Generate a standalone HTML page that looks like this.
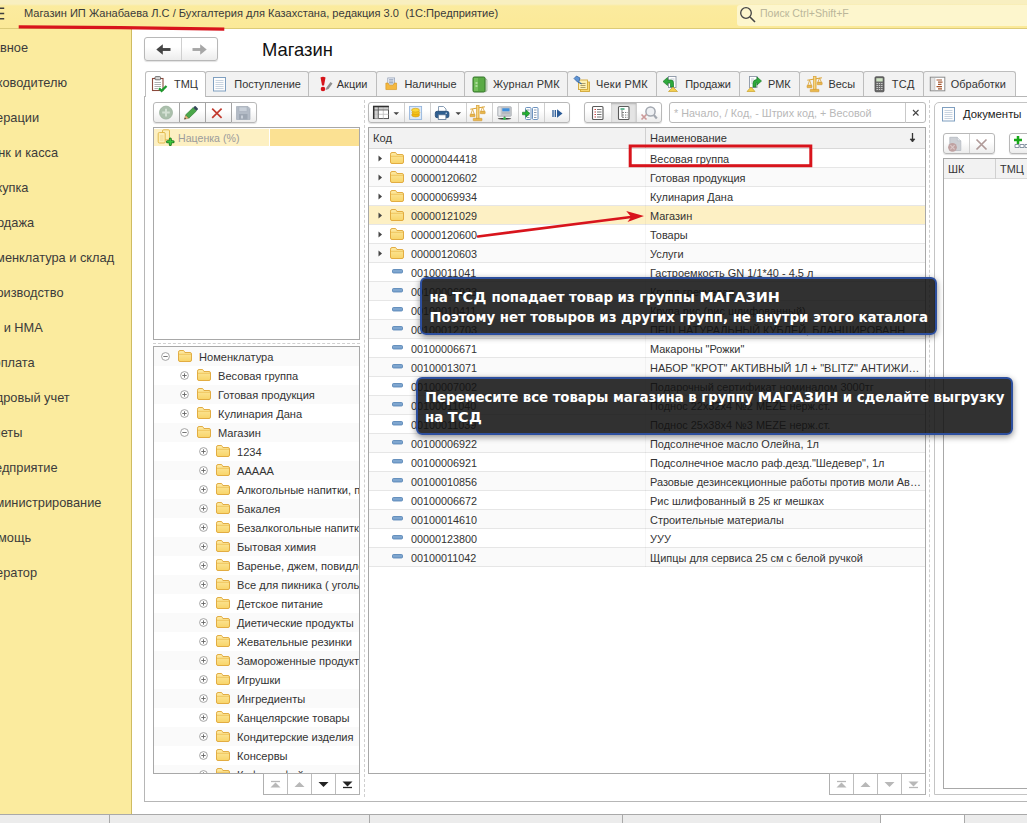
<!DOCTYPE html>
<html lang="ru"><head><meta charset="utf-8"><title>Магазин</title>
<style>
*{box-sizing:border-box;margin:0;padding:0}
html,body{width:1027px;height:823px;overflow:hidden;background:#fff}
body{font-family:"Liberation Sans",Arial,sans-serif;font-size:11.1px;color:#333;position:relative}
.abs,.abs>*,.row>*{position:absolute}
svg{position:absolute;overflow:visible}
#top{left:0;top:0;width:1027px;height:29px;background:linear-gradient(#f8efc0 0,#f8efc0 4px,#fbeb9e 6px,#fbe998 100%);border-bottom:1px solid #dccb78}
#top .ttl{left:24px;top:6.500px;color:#3a3a3a;white-space:pre}
#top .ham{left:-8px;top:5px;font-size:14px;color:#444}
#search{left:737px;top:5px;width:290px;height:21px;background:#fdf6cd;border-radius:3px 0 0 3px}
#search span{left:23px;top:2px;color:#bbb69a;font-size:10.600px}
#side{left:0;top:29px;width:132px;height:785px;background:#fbeb9e;border-right:1px solid #cfbc62}
#side div{white-space:nowrap;font-size:12.8px;line-height:16px;color:#3b3b3b}
#bot{left:0;top:814px;width:1027px;height:9px;background:#ececec;border-top:1px solid #a9a9a9}
#bot i{top:0;width:1px;height:9px;background:#a9a9a9}
.t{white-space:nowrap;line-height:14px}
.tab{top:71px;height:25px;background:#f2f2f2;border:1px solid #bdbdbd;border-bottom:none;border-radius:3px 3px 0 0}
.tab.on{background:#fff;height:26px;top:71px;z-index:2}
.tab span{top:5px;white-space:nowrap;font-size:10.95px;line-height:14px;color:#333}
.tab.on span{top:5px}
#frame{left:144px;top:96px;width:900px;height:706px;border:1px solid #b6b6b6;background:#fff}
.btns{border:1px solid #b8b8b8;border-radius:3px;background:linear-gradient(#fff 40%,#ececec);box-shadow:0 1px 1px rgba(0,0,0,.12)}
.btns i{top:0;width:1px;height:100%;background:#cfcfcf}
.box{border:1px solid #a8a8a8;background:#fff;overflow:hidden}
.row{left:0;height:19px;width:100%}
.row .t{top:3px}
.g{background:#fafafa}
.vd{width:0;border-left:1px dashed #cfcfcf}
.hd{height:0;border-top:1px dashed #cfcfcf}
.ov{background:rgba(18,18,18,.87);border:2px solid #2d4f9e;border-radius:6px;box-shadow:0 2px 6px rgba(0,0,0,.45);color:#fff;font-family:"DejaVu Sans","Liberation Sans",sans-serif;font-weight:bold;white-space:nowrap}
.ov b{position:static;font-size:14.4px;line-height:0;letter-spacing:.05px}
.ov b.w{letter-spacing:.45px}
</style></head><body>
<svg width="0" height="0" style="left:0;top:0"><defs><linearGradient id="fg" x1="0" y1="0" x2="0" y2="1"><stop offset="0" stop-color="#fdeaa4"/><stop offset="1" stop-color="#f8d468"/></linearGradient></defs></svg>
<div id="top" class="abs">
 <svg style="left:0;top:0" width="6" height="24"><path d="M-4 8.300h8.200M-4 13.500h8.200M-4 18.700h8.200" stroke="#3f3f3f" stroke-width="1.500"/></svg>
 <div class="ttl">Магазин ИП Жанабаева Л.С / Бухгалтерия для Казахстана, редакция 3.0  (1С:Предприятие)</div>
 <div id="search" class="abs"><svg style="left:2px;top:1px" width="17" height="17" viewBox="0 0 17 17"><circle cx="7" cy="7" r="5.300" fill="none" stroke="#444" stroke-width="1.300"/><path d="M11 11l5 5" stroke="#444" stroke-width="1.600"/></svg><span>Поиск Ctrl+Shift+F</span></div>
</div>
<div id="side" class="abs">
<div style="top:11px;right:102.9px">Главное</div>
<div style="top:46px;right:63.9px">Руководителю</div>
<div style="top:81px;right:91.9px">Операции</div>
<div style="top:116px;right:72.9px">Банк и касса</div>
<div style="top:151px;right:102.5px">Покупка</div>
<div style="top:186px;right:96.9px">Продажа</div>
<div style="top:221px;right:16.9px">Номенклатура и склад</div>
<div style="top:256px;right:67.5px">Производство</div>
<div style="top:291px;right:88.2px">ОС и НМА</div>
<div style="top:326px;right:96.3px">Зарплата</div>
<div style="top:361px;right:61.3px">Кадровый учет</div>
<div style="top:396px;right:108.6px">Отчеты</div>
<div style="top:431px;right:73.4px">Предприятие</div>
<div style="top:466px;right:29.6px">Администрирование</div>
<div style="top:501px;right:99.9px">Помощь</div>
<div style="top:536px;right:93.9px">Оператор</div>
</div>

<div class="abs btns" style="left:144px;top:37px;width:74px;height:24px"><i style="left:36px"></i>
<svg style="left:9px;top:5px" width="18" height="13"><path d="M16.500 6.500H6" stroke="#444" stroke-width="2.900"/><path d="M8.800 1.200L2.300 6.500l6.500 5.300z" fill="#444"/></svg>
<svg style="left:46px;top:5px" width="18" height="13"><path d="M1.500 6.500H12" stroke="#a6a6a6" stroke-width="2.900"/><path d="M9.200 1.200l6.500 5.300-6.500 5.300z" fill="#a6a6a6"/></svg></div>
<div class="abs t" style="left:262px;top:39px;font-size:18.4px;line-height:22px;color:#111">Магазин</div>
<div class="abs tab on" style="left:145px;width:61px"><svg style="left:5px;top:4px" width="16" height="16" viewBox="0 0 16 16"><rect x="1.500" y="2.500" width="10.500" height="12" fill="#fff" stroke="#8b4a3c" stroke-width="1.100"/><rect x="4" y=".600" width="5.500" height="3.200" rx=".800" fill="#d8d8d8" stroke="#555" stroke-width=".800"/><path d="M3.500 6.500h6.500M3.500 8.500h6.500M3.500 10.500h6.500M3.500 12.500h3.500" stroke="#9a9a9a" stroke-width=".800"/><path d="M8 12.200l2.600 2.600L15.500 10" fill="none" stroke="#1e9a2e" stroke-width="2.300"/></svg><span style="left:28.0px">ТМЦ</span></div>
<div class="abs tab" style="left:205px;width:104px"><svg style="left:6px;top:4px" width="16" height="16" viewBox="0 0 16 16"><rect x="1.500" y="1.500" width="12" height="13.500" fill="#fdfdfd" stroke="#7f9fc0"/><path d="M3.500 4.500h8M3.500 6.500h8M3.500 8.500h8M3.500 10.500h8M3.500 12.500h8" stroke="#c3cfdc" stroke-width=".900"/></svg><span style="left:28.3px">Поступление</span></div>
<div class="abs tab" style="left:308px;width:69px"><svg style="left:9px;top:4px" width="16" height="16" viewBox="0 0 16 16"><path d="M2.500 1.500Q5 0 7.500 1.500L6 9.500H4z" fill="#d6141a"/><circle cx="5" cy="13" r="2.300" fill="#d6141a"/><path d="M8.500 11.500l4-5.500 2 1.500-4 5.500-2.800 1z" fill="#8f8f8f"/></svg><span style="left:27.8px">Акции</span></div>
<div class="abs tab" style="left:376px;width:89px"><svg style="left:7px;top:4px" width="16" height="16" viewBox="0 0 16 16"><g transform="translate(1.200,1.500) scale(.860)"><rect x="3" y=".500" width="8" height="7" fill="#e9eef6" stroke="#8b9ab3" stroke-width=".800"/><path d="M4.500 2.500h5M4.500 4.200h5M4.500 5.900h5" stroke="#7a8aa5" stroke-width=".800"/><path d="M.800 6.500h2.500l1.500 2.500h4.400l1.500-2.500h2.500v7.500H.800z" fill="#f4b840" stroke="#d99a25" stroke-width=".800"/></g></svg><span style="left:27.4px">Наличные</span></div>
<div class="abs tab" style="left:464px;width:104px"><svg style="left:7px;top:4px" width="16" height="16" viewBox="0 0 16 16"><path d="M13 2.500l2 1.200v11l-2 1.300z" fill="#d9e6d3" stroke="#7f9a78" stroke-width=".600"/><rect x="1" y="1" width="12" height="15" rx="1.300" fill="#5aaa45" stroke="#34742a"/><rect x="2" y="2" width="4" height="13" fill="#7cc763" opacity=".700"/><path d="M3.500 7h2M3.500 10h2" stroke="#e7f5df" stroke-width="1.200"/></svg><span style="left:28.0px;letter-spacing:.1px">Журнал РМК</span></div>
<div class="abs tab" style="left:567px;width:90px"><svg style="left:6px;top:4px" width="16" height="16" viewBox="0 0 16 16"><rect x="6.500" y="6" width="9" height="9.500" fill="#f7d873" stroke="#d1a637" stroke-width=".900"/><rect x="4.500" y="4" width="9" height="9.500" fill="#fdf0b4" stroke="#d1a637" stroke-width=".900"/><path d="M6.500 7.500h5M6.500 9.500h5M6.500 11.500h5" stroke="#9a8a55" stroke-width=".800"/><path d="M0 2.500l2.500-2.500 3.500 2-1 3.500 2.500 2.500-4-2z" fill="#5f95d6" stroke="#2a5a9a" stroke-width=".700"/></svg><span style="left:28.0px;letter-spacing:.24px">Чеки РМК</span></div>
<div class="abs tab" style="left:656px;width:84px"><svg style="left:6px;top:4px" width="16" height="16" viewBox="0 0 16 16"><rect x="5.500" y=".500" width="7.500" height="11" fill="#fff" stroke="#8a95a5" stroke-width=".900"/><path d="M7.500 3h4M7.500 5h4" stroke="#b0b8c4" stroke-width=".800"/><path d="M0 5.500L4.500 1.500V4h3.500Q10.500 4 10.500 7V11H7.500V8Q7.500 7 6.500 7h-2V9.500z" fill="#2eaa3c" stroke="#1a7a28" stroke-width=".700"/><path d="M5.500 15.500l4.500-4.500 4.500 4.500z" fill="#f3cf4f" stroke="#c9a02a" stroke-width=".700"/></svg><span style="left:28.2px">Продажи</span></div>
<div class="abs tab" style="left:739px;width:61px"><svg style="left:7px;top:4px" width="16" height="16" viewBox="0 0 16 16"><rect x="2.500" y=".500" width="7.500" height="11" fill="#fff" stroke="#8a95a5" stroke-width=".900"/><path d="M4 3h3M4 5h2.500M4 7h2" stroke="#b0b8c4" stroke-width=".800"/><path d="M6 11V7.500Q6 3.500 10 3.500V1L14.500 5 10 9V6.500Q9 6.500 9 7.500V11z" fill="#2eaa3c" stroke="#1a7a28" stroke-width=".700"/><path d="M0 15.500l4-4.500 4 4.500z" fill="#f3cf4f" stroke="#c9a02a" stroke-width=".700"/></svg><span style="left:28.0px">РМК</span></div>
<div class="abs tab" style="left:799px;width:65px"><svg style="left:6.5px;top:4px" width="16" height="16" viewBox="0 0 16 16"><path d="M.300 4.300L14.900 1.700" stroke="#dba538" stroke-width="1.100"/><path d="M2.600 4.200L.800 9.400h3.600zM12.600 1.900l-1.800 4.500h3.600z" fill="none" stroke="#dba538" stroke-width=".800"/><rect x="0" y="9.300" width="5" height="2.400" rx=".500" fill="#e9b84c" stroke="#c98e2a" stroke-width=".500"/><rect x="10.200" y="6.300" width="5" height="2.400" rx=".500" fill="#e9b84c" stroke="#c98e2a" stroke-width=".500"/><rect x="6.400" y=".300" width="2.700" height="13.500" fill="#edbb4e" stroke="#d19a2e" stroke-width=".500"/><path d="M7.700 1v12" stroke="#fbe3a0" stroke-width=".800"/><rect x="3.200" y="13.300" width="8.800" height="2.500" rx=".500" fill="#e9b84c" stroke="#c98e2a" stroke-width=".500"/></svg><span style="left:28.4px">Весы</span></div>
<div class="abs tab" style="left:863px;width:61px"><svg style="left:7px;top:4px" width="16" height="16" viewBox="0 0 16 16"><rect x="4" y=".800" width="9" height="15" rx="1" fill="#6a6a6a" stroke="#4a4a4a" stroke-width=".800"/><rect x="5.300" y="2.200" width="6.400" height="3.300" fill="#cfe3c4"/><path d="M5.500 7.500h6M5.500 9.500h6M5.500 11.500h6M5.500 13.500h6" stroke="#d0d0d0" stroke-width="1.100" stroke-dasharray="1.400 .900"/></svg><span style="left:27.7px;letter-spacing:.5px">ТСД</span></div>
<div class="abs tab" style="left:923px;width:93px"><svg style="left:5px;top:4px" width="16" height="16" viewBox="0 0 16 16"><rect x="1.300" y="1.200" width="14.500" height="13.600" fill="#fff" stroke="#8a8a8a" stroke-width="1"/><rect x="2" y="2" width="3.500" height="12" fill="#e3e3e3"/><path d="M5.800 1.500v13" stroke="#b5b5b5" stroke-width=".700"/><path d="M7.500 4h5.500M9 6.200h4.500M9 8.400h3.500M7.500 10.600h5.500M9 12.800h4" stroke="#a4552f" stroke-width="1.200"/></svg><span style="left:26.8px">Обработки</span></div>

<div id="frame" class="abs"></div>
<!-- left panel -->
<div class="abs btns" style="left:153px;top:102px;width:104px;height:21px"><i style="left:25px;background:#a5a5a5"></i><i style="left:51px;background:#a5a5a5"></i><i style="left:77px;background:#a5a5a5"></i>
<div style="left:26px;top:-1px;width:51px;height:21px;border-top:1px solid #a5a5a5;border-bottom:1px solid #a5a5a5"></div>
<svg style="left:0;top:0" width="102" height="19">
<circle cx="12" cy="9.600" r="6.500" fill="#abc0ac" stroke="#9db29e" stroke-width=".800"/><path d="M12 5.800v7.600M8.200 9.600h7.600" stroke="#d3e0d3" stroke-width="2"/>
<g transform="translate(30.400,16.300) rotate(-44)"><path d="M0 0L4 -2.300V2.300z" fill="#e9b877" stroke="#8a6a3a" stroke-width=".400"/><path d="M0 0l1.500-.900v1.800z" fill="#333"/><rect x="4" y="-2.300" width="10.500" height="4.600" fill="#4aa84a" stroke="#2f7a32" stroke-width=".600"/><rect x="14.500" y="-2.300" width="2.700" height="4.600" rx=".800" fill="#34465a"/></g>
<path d="M58.200 5.600l9.400 9.200M67.600 5.600l-9.400 9.200" stroke="#c23a2e" stroke-width="1.700"/>
<path d="M82.500 3.500h11.500l2 2v11h-13.500z" fill="#b3bbc6" stroke="#a3acb8" stroke-width=".700"/><rect x="85" y="4" width="8" height="4.500" fill="#c9d0d9" stroke="#a3acb8" stroke-width=".500"/><rect x="85" y="11" width="8.500" height="5.500" fill="#9ea7b3"/><rect x="87" y="12.500" width="2" height="3" fill="#c9d0d9"/>
</svg>
</div>
<div class="abs box" style="left:153px;top:127px;width:207px;height:213px">
 <div style="left:0;top:1px;width:115px;height:16.500px;background:#fdf0c2"></div><div style="left:116px;top:1px;width:90px;height:16.500px;background:#fbe193"></div>
 <svg style="left:3px;top:1px" width="18" height="17"><rect x="5.500" y=".800" width="7" height="10" rx="1.200" fill="#fdeeb5" stroke="#e0b445" stroke-width=".900"/><rect x="1.200" y="3.500" width="7" height="10.500" rx="1.200" fill="#fdeeb5" stroke="#e0b445" stroke-width=".900"/><path d="M3 7h3.500M3 9h3.500M3 11h3.500" stroke="#ecd28a" stroke-width=".800"/><path d="M13.300 10v5.600M10.500 12.800h5.600" stroke="#1f7a1f" stroke-width="3" stroke-linecap="round"/><path d="M13.300 10.300v5M10.800 12.800h5" stroke="#3cc43c" stroke-width="1.600" stroke-linecap="round"/></svg>
 <span class="t" style="left:24px;top:3px;color:#9b9b9b;font-size:10.600px">Наценка (%)</span>
</div>
<div class="abs hd" style="left:153px;top:343px;width:207px"></div>
<div class="abs box" style="left:153px;top:346px;width:207px;height:428px">
<div class="row g" style="top:0px"><svg style="left:6px;top:4px" width="11" height="11" viewBox="0 0 11 11"><circle cx="5.5" cy="5.5" r="3.9" fill="#fff" stroke="#9a9a9a" stroke-width=".9"/><path d="M3.300 5.5h4.400" stroke="#666" stroke-width=".9"/></svg><svg style="left:24px;top:3px" width="14" height="12" viewBox="0 0 14 12"><path d="M.5 2.200Q.5 .5 2 .5H5Q6 .5 6.400 1.400L6.900 2.500H12Q13.500 2.500 13.500 4V10Q13.500 11.500 12 11.500H2Q.5 11.500 .5 10Z" fill="url(#fg)" stroke="#dfa534" stroke-width=".900"/><path d="M1 4.300h12" stroke="#e9b949" stroke-width=".700"/></svg><span class="t" style="left:45px">Номенклатура</span></div>
<div class="row" style="top:19px"><svg style="left:25px;top:4px" width="11" height="11" viewBox="0 0 11 11"><circle cx="5.5" cy="5.5" r="3.9" fill="#fff" stroke="#9a9a9a" stroke-width=".9"/><path d="M5.5 3.3v4.4M3.300 5.5h4.400" stroke="#666" stroke-width=".9"/></svg><svg style="left:43px;top:3px" width="14" height="12" viewBox="0 0 14 12"><path d="M.5 2.200Q.5 .5 2 .5H5Q6 .5 6.400 1.400L6.900 2.500H12Q13.500 2.500 13.500 4V10Q13.500 11.500 12 11.500H2Q.5 11.500 .5 10Z" fill="url(#fg)" stroke="#dfa534" stroke-width=".900"/><path d="M1 4.300h12" stroke="#e9b949" stroke-width=".700"/></svg><span class="t" style="left:64px">Весовая группа</span></div>
<div class="row g" style="top:38px"><svg style="left:25px;top:4px" width="11" height="11" viewBox="0 0 11 11"><circle cx="5.5" cy="5.5" r="3.9" fill="#fff" stroke="#9a9a9a" stroke-width=".9"/><path d="M5.5 3.3v4.4M3.300 5.5h4.400" stroke="#666" stroke-width=".9"/></svg><svg style="left:43px;top:3px" width="14" height="12" viewBox="0 0 14 12"><path d="M.5 2.200Q.5 .5 2 .5H5Q6 .5 6.400 1.400L6.900 2.500H12Q13.500 2.500 13.500 4V10Q13.500 11.500 12 11.500H2Q.5 11.500 .5 10Z" fill="url(#fg)" stroke="#dfa534" stroke-width=".900"/><path d="M1 4.300h12" stroke="#e9b949" stroke-width=".700"/></svg><span class="t" style="left:64px">Готовая продукция</span></div>
<div class="row" style="top:57px"><svg style="left:25px;top:4px" width="11" height="11" viewBox="0 0 11 11"><circle cx="5.5" cy="5.5" r="3.9" fill="#fff" stroke="#9a9a9a" stroke-width=".9"/><path d="M5.5 3.3v4.4M3.300 5.5h4.400" stroke="#666" stroke-width=".9"/></svg><svg style="left:43px;top:3px" width="14" height="12" viewBox="0 0 14 12"><path d="M.5 2.200Q.5 .5 2 .5H5Q6 .5 6.400 1.400L6.900 2.500H12Q13.500 2.500 13.500 4V10Q13.500 11.500 12 11.500H2Q.5 11.500 .5 10Z" fill="url(#fg)" stroke="#dfa534" stroke-width=".900"/><path d="M1 4.300h12" stroke="#e9b949" stroke-width=".700"/></svg><span class="t" style="left:64px">Кулинария Дана</span></div>
<div class="row g" style="top:76px"><svg style="left:25px;top:4px" width="11" height="11" viewBox="0 0 11 11"><circle cx="5.5" cy="5.5" r="3.9" fill="#fff" stroke="#9a9a9a" stroke-width=".9"/><path d="M3.300 5.5h4.400" stroke="#666" stroke-width=".9"/></svg><svg style="left:43px;top:3px" width="14" height="12" viewBox="0 0 14 12"><path d="M.5 2.200Q.5 .5 2 .5H5Q6 .5 6.400 1.400L6.900 2.500H12Q13.500 2.500 13.500 4V10Q13.500 11.500 12 11.500H2Q.5 11.500 .5 10Z" fill="url(#fg)" stroke="#dfa534" stroke-width=".900"/><path d="M1 4.300h12" stroke="#e9b949" stroke-width=".700"/></svg><span class="t" style="left:64px">Магазин</span></div>
<div class="row" style="top:95px"><svg style="left:44px;top:4px" width="11" height="11" viewBox="0 0 11 11"><circle cx="5.5" cy="5.5" r="3.9" fill="#fff" stroke="#9a9a9a" stroke-width=".9"/><path d="M5.5 3.3v4.4M3.300 5.5h4.400" stroke="#666" stroke-width=".9"/></svg><svg style="left:62px;top:3px" width="14" height="12" viewBox="0 0 14 12"><path d="M.5 2.200Q.5 .5 2 .5H5Q6 .5 6.400 1.400L6.900 2.500H12Q13.500 2.500 13.500 4V10Q13.500 11.500 12 11.500H2Q.5 11.500 .5 10Z" fill="url(#fg)" stroke="#dfa534" stroke-width=".900"/><path d="M1 4.300h12" stroke="#e9b949" stroke-width=".700"/></svg><span class="t" style="left:83px">1234</span></div>
<div class="row g" style="top:114px"><svg style="left:44px;top:4px" width="11" height="11" viewBox="0 0 11 11"><circle cx="5.5" cy="5.5" r="3.9" fill="#fff" stroke="#9a9a9a" stroke-width=".9"/><path d="M5.5 3.3v4.4M3.300 5.5h4.400" stroke="#666" stroke-width=".9"/></svg><svg style="left:62px;top:3px" width="14" height="12" viewBox="0 0 14 12"><path d="M.5 2.200Q.5 .5 2 .5H5Q6 .5 6.400 1.400L6.900 2.500H12Q13.500 2.500 13.500 4V10Q13.500 11.500 12 11.500H2Q.5 11.500 .5 10Z" fill="url(#fg)" stroke="#dfa534" stroke-width=".900"/><path d="M1 4.300h12" stroke="#e9b949" stroke-width=".700"/></svg><span class="t" style="left:83px">ААААА</span></div>
<div class="row" style="top:133px"><svg style="left:44px;top:4px" width="11" height="11" viewBox="0 0 11 11"><circle cx="5.5" cy="5.5" r="3.9" fill="#fff" stroke="#9a9a9a" stroke-width=".9"/><path d="M5.5 3.3v4.4M3.300 5.5h4.400" stroke="#666" stroke-width=".9"/></svg><svg style="left:62px;top:3px" width="14" height="12" viewBox="0 0 14 12"><path d="M.5 2.200Q.5 .5 2 .5H5Q6 .5 6.400 1.400L6.900 2.500H12Q13.500 2.500 13.500 4V10Q13.500 11.500 12 11.500H2Q.5 11.500 .5 10Z" fill="url(#fg)" stroke="#dfa534" stroke-width=".900"/><path d="M1 4.300h12" stroke="#e9b949" stroke-width=".700"/></svg><span class="t" style="left:83px">Алкогольные напитки, пиво</span></div>
<div class="row g" style="top:152px"><svg style="left:44px;top:4px" width="11" height="11" viewBox="0 0 11 11"><circle cx="5.5" cy="5.5" r="3.9" fill="#fff" stroke="#9a9a9a" stroke-width=".9"/><path d="M5.5 3.3v4.4M3.300 5.5h4.400" stroke="#666" stroke-width=".9"/></svg><svg style="left:62px;top:3px" width="14" height="12" viewBox="0 0 14 12"><path d="M.5 2.200Q.5 .5 2 .5H5Q6 .5 6.400 1.400L6.900 2.500H12Q13.500 2.500 13.500 4V10Q13.500 11.500 12 11.500H2Q.5 11.500 .5 10Z" fill="url(#fg)" stroke="#dfa534" stroke-width=".900"/><path d="M1 4.300h12" stroke="#e9b949" stroke-width=".700"/></svg><span class="t" style="left:83px">Бакалея</span></div>
<div class="row" style="top:171px"><svg style="left:44px;top:4px" width="11" height="11" viewBox="0 0 11 11"><circle cx="5.5" cy="5.5" r="3.9" fill="#fff" stroke="#9a9a9a" stroke-width=".9"/><path d="M5.5 3.3v4.4M3.300 5.5h4.400" stroke="#666" stroke-width=".9"/></svg><svg style="left:62px;top:3px" width="14" height="12" viewBox="0 0 14 12"><path d="M.5 2.200Q.5 .5 2 .5H5Q6 .5 6.400 1.400L6.900 2.500H12Q13.500 2.500 13.500 4V10Q13.500 11.500 12 11.500H2Q.5 11.500 .5 10Z" fill="url(#fg)" stroke="#dfa534" stroke-width=".900"/><path d="M1 4.300h12" stroke="#e9b949" stroke-width=".700"/></svg><span class="t" style="left:83px">Безалкогольные напитки</span></div>
<div class="row g" style="top:190px"><svg style="left:44px;top:4px" width="11" height="11" viewBox="0 0 11 11"><circle cx="5.5" cy="5.5" r="3.9" fill="#fff" stroke="#9a9a9a" stroke-width=".9"/><path d="M5.5 3.3v4.4M3.300 5.5h4.400" stroke="#666" stroke-width=".9"/></svg><svg style="left:62px;top:3px" width="14" height="12" viewBox="0 0 14 12"><path d="M.5 2.200Q.5 .5 2 .5H5Q6 .5 6.400 1.400L6.900 2.500H12Q13.500 2.500 13.500 4V10Q13.500 11.500 12 11.500H2Q.5 11.500 .5 10Z" fill="url(#fg)" stroke="#dfa534" stroke-width=".900"/><path d="M1 4.300h12" stroke="#e9b949" stroke-width=".700"/></svg><span class="t" style="left:83px">Бытовая химия</span></div>
<div class="row" style="top:209px"><svg style="left:44px;top:4px" width="11" height="11" viewBox="0 0 11 11"><circle cx="5.5" cy="5.5" r="3.9" fill="#fff" stroke="#9a9a9a" stroke-width=".9"/><path d="M5.5 3.3v4.4M3.300 5.5h4.400" stroke="#666" stroke-width=".9"/></svg><svg style="left:62px;top:3px" width="14" height="12" viewBox="0 0 14 12"><path d="M.5 2.200Q.5 .5 2 .5H5Q6 .5 6.400 1.400L6.900 2.500H12Q13.500 2.500 13.500 4V10Q13.500 11.500 12 11.500H2Q.5 11.500 .5 10Z" fill="url(#fg)" stroke="#dfa534" stroke-width=".900"/><path d="M1 4.300h12" stroke="#e9b949" stroke-width=".700"/></svg><span class="t" style="left:83px">Варенье, джем, повидло</span></div>
<div class="row g" style="top:228px"><svg style="left:44px;top:4px" width="11" height="11" viewBox="0 0 11 11"><circle cx="5.5" cy="5.5" r="3.9" fill="#fff" stroke="#9a9a9a" stroke-width=".9"/><path d="M5.5 3.3v4.4M3.300 5.5h4.400" stroke="#666" stroke-width=".9"/></svg><svg style="left:62px;top:3px" width="14" height="12" viewBox="0 0 14 12"><path d="M.5 2.200Q.5 .5 2 .5H5Q6 .5 6.400 1.400L6.900 2.500H12Q13.500 2.500 13.500 4V10Q13.500 11.500 12 11.500H2Q.5 11.500 .5 10Z" fill="url(#fg)" stroke="#dfa534" stroke-width=".900"/><path d="M1 4.300h12" stroke="#e9b949" stroke-width=".700"/></svg><span class="t" style="left:83px">Все для пикника ( уголь, розжиг)</span></div>
<div class="row" style="top:247px"><svg style="left:44px;top:4px" width="11" height="11" viewBox="0 0 11 11"><circle cx="5.5" cy="5.5" r="3.9" fill="#fff" stroke="#9a9a9a" stroke-width=".9"/><path d="M5.5 3.3v4.4M3.300 5.5h4.400" stroke="#666" stroke-width=".9"/></svg><svg style="left:62px;top:3px" width="14" height="12" viewBox="0 0 14 12"><path d="M.5 2.200Q.5 .5 2 .5H5Q6 .5 6.400 1.400L6.900 2.500H12Q13.500 2.500 13.500 4V10Q13.500 11.500 12 11.500H2Q.5 11.500 .5 10Z" fill="url(#fg)" stroke="#dfa534" stroke-width=".900"/><path d="M1 4.300h12" stroke="#e9b949" stroke-width=".700"/></svg><span class="t" style="left:83px">Детское питание</span></div>
<div class="row g" style="top:266px"><svg style="left:44px;top:4px" width="11" height="11" viewBox="0 0 11 11"><circle cx="5.5" cy="5.5" r="3.9" fill="#fff" stroke="#9a9a9a" stroke-width=".9"/><path d="M5.5 3.3v4.4M3.300 5.5h4.400" stroke="#666" stroke-width=".9"/></svg><svg style="left:62px;top:3px" width="14" height="12" viewBox="0 0 14 12"><path d="M.5 2.200Q.5 .5 2 .5H5Q6 .5 6.400 1.400L6.900 2.500H12Q13.500 2.500 13.500 4V10Q13.500 11.500 12 11.500H2Q.5 11.500 .5 10Z" fill="url(#fg)" stroke="#dfa534" stroke-width=".900"/><path d="M1 4.300h12" stroke="#e9b949" stroke-width=".700"/></svg><span class="t" style="left:83px">Диетические продукты</span></div>
<div class="row" style="top:285px"><svg style="left:44px;top:4px" width="11" height="11" viewBox="0 0 11 11"><circle cx="5.5" cy="5.5" r="3.9" fill="#fff" stroke="#9a9a9a" stroke-width=".9"/><path d="M5.5 3.3v4.4M3.300 5.5h4.400" stroke="#666" stroke-width=".9"/></svg><svg style="left:62px;top:3px" width="14" height="12" viewBox="0 0 14 12"><path d="M.5 2.200Q.5 .5 2 .5H5Q6 .5 6.400 1.400L6.900 2.500H12Q13.500 2.500 13.500 4V10Q13.500 11.500 12 11.500H2Q.5 11.500 .5 10Z" fill="url(#fg)" stroke="#dfa534" stroke-width=".900"/><path d="M1 4.300h12" stroke="#e9b949" stroke-width=".700"/></svg><span class="t" style="left:83px">Жевательные резинки</span></div>
<div class="row g" style="top:304px"><svg style="left:44px;top:4px" width="11" height="11" viewBox="0 0 11 11"><circle cx="5.5" cy="5.5" r="3.9" fill="#fff" stroke="#9a9a9a" stroke-width=".9"/><path d="M5.5 3.3v4.4M3.300 5.5h4.400" stroke="#666" stroke-width=".9"/></svg><svg style="left:62px;top:3px" width="14" height="12" viewBox="0 0 14 12"><path d="M.5 2.200Q.5 .5 2 .5H5Q6 .5 6.400 1.400L6.900 2.500H12Q13.500 2.500 13.500 4V10Q13.500 11.500 12 11.500H2Q.5 11.500 .5 10Z" fill="url(#fg)" stroke="#dfa534" stroke-width=".900"/><path d="M1 4.300h12" stroke="#e9b949" stroke-width=".700"/></svg><span class="t" style="left:83px">Замороженные продукты</span></div>
<div class="row" style="top:323px"><svg style="left:44px;top:4px" width="11" height="11" viewBox="0 0 11 11"><circle cx="5.5" cy="5.5" r="3.9" fill="#fff" stroke="#9a9a9a" stroke-width=".9"/><path d="M5.5 3.3v4.4M3.300 5.5h4.400" stroke="#666" stroke-width=".9"/></svg><svg style="left:62px;top:3px" width="14" height="12" viewBox="0 0 14 12"><path d="M.5 2.200Q.5 .5 2 .5H5Q6 .5 6.400 1.400L6.900 2.500H12Q13.500 2.500 13.500 4V10Q13.500 11.500 12 11.500H2Q.5 11.500 .5 10Z" fill="url(#fg)" stroke="#dfa534" stroke-width=".900"/><path d="M1 4.300h12" stroke="#e9b949" stroke-width=".700"/></svg><span class="t" style="left:83px">Игрушки</span></div>
<div class="row g" style="top:342px"><svg style="left:44px;top:4px" width="11" height="11" viewBox="0 0 11 11"><circle cx="5.5" cy="5.5" r="3.9" fill="#fff" stroke="#9a9a9a" stroke-width=".9"/><path d="M5.5 3.3v4.4M3.300 5.5h4.400" stroke="#666" stroke-width=".9"/></svg><svg style="left:62px;top:3px" width="14" height="12" viewBox="0 0 14 12"><path d="M.5 2.200Q.5 .5 2 .5H5Q6 .5 6.400 1.400L6.900 2.500H12Q13.500 2.500 13.500 4V10Q13.500 11.500 12 11.500H2Q.5 11.500 .5 10Z" fill="url(#fg)" stroke="#dfa534" stroke-width=".900"/><path d="M1 4.300h12" stroke="#e9b949" stroke-width=".700"/></svg><span class="t" style="left:83px">Ингредиенты</span></div>
<div class="row" style="top:361px"><svg style="left:44px;top:4px" width="11" height="11" viewBox="0 0 11 11"><circle cx="5.5" cy="5.5" r="3.9" fill="#fff" stroke="#9a9a9a" stroke-width=".9"/><path d="M5.5 3.3v4.4M3.300 5.5h4.400" stroke="#666" stroke-width=".9"/></svg><svg style="left:62px;top:3px" width="14" height="12" viewBox="0 0 14 12"><path d="M.5 2.200Q.5 .5 2 .5H5Q6 .5 6.400 1.400L6.900 2.500H12Q13.500 2.500 13.500 4V10Q13.500 11.500 12 11.500H2Q.5 11.500 .5 10Z" fill="url(#fg)" stroke="#dfa534" stroke-width=".900"/><path d="M1 4.300h12" stroke="#e9b949" stroke-width=".700"/></svg><span class="t" style="left:83px">Канцелярские товары</span></div>
<div class="row g" style="top:380px"><svg style="left:44px;top:4px" width="11" height="11" viewBox="0 0 11 11"><circle cx="5.5" cy="5.5" r="3.9" fill="#fff" stroke="#9a9a9a" stroke-width=".9"/><path d="M5.5 3.3v4.4M3.300 5.5h4.400" stroke="#666" stroke-width=".9"/></svg><svg style="left:62px;top:3px" width="14" height="12" viewBox="0 0 14 12"><path d="M.5 2.200Q.5 .5 2 .5H5Q6 .5 6.400 1.400L6.900 2.500H12Q13.500 2.500 13.500 4V10Q13.500 11.500 12 11.500H2Q.5 11.500 .5 10Z" fill="url(#fg)" stroke="#dfa534" stroke-width=".900"/><path d="M1 4.300h12" stroke="#e9b949" stroke-width=".700"/></svg><span class="t" style="left:83px">Кондитерские изделия</span></div>
<div class="row" style="top:399px"><svg style="left:44px;top:4px" width="11" height="11" viewBox="0 0 11 11"><circle cx="5.5" cy="5.5" r="3.9" fill="#fff" stroke="#9a9a9a" stroke-width=".9"/><path d="M5.5 3.3v4.4M3.300 5.5h4.400" stroke="#666" stroke-width=".9"/></svg><svg style="left:62px;top:3px" width="14" height="12" viewBox="0 0 14 12"><path d="M.5 2.200Q.5 .5 2 .5H5Q6 .5 6.400 1.400L6.900 2.500H12Q13.500 2.500 13.500 4V10Q13.500 11.500 12 11.500H2Q.5 11.500 .5 10Z" fill="url(#fg)" stroke="#dfa534" stroke-width=".900"/><path d="M1 4.300h12" stroke="#e9b949" stroke-width=".700"/></svg><span class="t" style="left:83px">Консервы</span></div>
<div class="row g" style="top:418px"><svg style="left:44px;top:4px" width="11" height="11" viewBox="0 0 11 11"><circle cx="5.5" cy="5.5" r="3.9" fill="#fff" stroke="#9a9a9a" stroke-width=".9"/><path d="M5.5 3.3v4.4M3.300 5.5h4.400" stroke="#666" stroke-width=".9"/></svg><svg style="left:62px;top:3px" width="14" height="12" viewBox="0 0 14 12"><path d="M.5 2.200Q.5 .5 2 .5H5Q6 .5 6.400 1.400L6.900 2.500H12Q13.500 2.500 13.500 4V10Q13.500 11.500 12 11.500H2Q.5 11.500 .5 10Z" fill="url(#fg)" stroke="#dfa534" stroke-width=".900"/><path d="M1 4.300h12" stroke="#e9b949" stroke-width=".700"/></svg><span class="t" style="left:83px">Кофе, кофейные напитки</span></div>

</div>
<div class="abs" style="left:263px;top:773px;width:97px;height:22px;border:1px solid #b0b0b0;background:#fff"><svg style="left:0;top:0" width="96" height="20"><path d="M7.0 7.500h9" stroke="#b8b8b8" stroke-width="1.300"/><path d="M6.5 13.500l5-5 5 5z" fill="#b8b8b8"/></svg><i style="left:23px;top:0;width:1px;height:20px;background:#bdbdbd"></i><svg style="left:0;top:0" width="96" height="20"><path d="M30.5 13l5-5 5 5z" fill="#b8b8b8"/></svg><i style="left:47px;top:0;width:1px;height:20px;background:#bdbdbd"></i><svg style="left:0;top:0" width="96" height="20"><path d="M54.5 8l5 5 5-5z" fill="#222"/></svg><i style="left:71px;top:0;width:1px;height:20px;background:#bdbdbd"></i><svg style="left:0;top:0" width="96" height="20"><path d="M79.0 13.500h9" stroke="#222" stroke-width="1.300"/><path d="M78.5 7.500l5 5 5-5z" fill="#222"/></svg></div>
<div class="abs vd" style="left:364px;top:100px;height:697px"></div>
<!-- middle -->
<div class="abs btns" style="left:368px;top:102px;width:202px;height:21px"><i style="left:35px"></i><i style="left:61px"></i><i style="left:97px"></i><i style="left:123px"></i><i style="left:149px"></i><i style="left:175px"></i>
<svg style="left:0;top:0" width="100" height="19">
<rect x="4.500" y="3.400" width="15" height="12.200" fill="#fff" stroke="#444" stroke-width=".900"/>
<path d="M4.500 3.400h15v3.600h-15zM4.500 3.400h4.800v12.200H4.500z" fill="#cfcfcf"/>
<path d="M9.300 7v8.600M14.300 3.400v12.200M4.500 11.300h15" stroke="#bdbdbd" stroke-width=".800"/>
<path d="M4 7h15.500M9.300 3.400v12.200" stroke="#555" stroke-width=".800"/>
<path d="M4.700 3v13M4 3.500h15.800" stroke="#2f2f2f" stroke-width="1.500"/>
<path d="M24.500 9.200h5.600l-2.800 2.700z" fill="#444"/>
<rect x="40.600" y="3.400" width="12" height="13" fill="#dde9f6" stroke="#93b4dc" stroke-width=".900"/>
<ellipse cx="46.600" cy="12" rx="3.900" ry="1.900" fill="#f2b90f" stroke="#d49a10" stroke-width=".600"/><ellipse cx="46.900" cy="9.600" rx="3.900" ry="1.900" fill="#f7c81c" stroke="#d49a10" stroke-width=".600"/><ellipse cx="46.500" cy="7.200" rx="3.900" ry="1.900" fill="#fbd93a" stroke="#d49a10" stroke-width=".600"/>
<path d="M69.500 9V3.500h5l2.500 2.500V9z" fill="#fff" stroke="#7c93ad" stroke-width=".900"/>
<rect x="66.300" y="8.300" width="13.600" height="6.400" rx="1.800" fill="#2f5f90" stroke="#234a73" stroke-width=".800"/>
<circle cx="77.200" cy="10.200" r=".700" fill="#e8eef5"/>
<rect x="69.300" y="11.800" width="7.600" height="4.700" fill="#fff" stroke="#55708f" stroke-width=".800"/>
<path d="M86.500 9.200h5.600l-2.800 2.700z" fill="#444"/>
</svg>
<svg style="left:101px;top:2px" width="16" height="16" viewBox="0 0 16 16"><path d="M.300 4.300L14.900 1.700" stroke="#dba538" stroke-width="1.100"/><path d="M2.600 4.200L.800 9.400h3.600zM12.600 1.900l-1.800 4.500h3.600z" fill="none" stroke="#dba538" stroke-width=".800"/><rect x="0" y="9.300" width="5" height="2.400" rx=".500" fill="#e9b84c" stroke="#c98e2a" stroke-width=".500"/><rect x="10.200" y="6.300" width="5" height="2.400" rx=".500" fill="#e9b84c" stroke="#c98e2a" stroke-width=".500"/><rect x="6.400" y=".300" width="2.700" height="13.500" fill="#edbb4e" stroke="#d19a2e" stroke-width=".500"/><path d="M7.700 1v12" stroke="#fbe3a0" stroke-width=".800"/><rect x="3.200" y="13.300" width="8.800" height="2.500" rx=".500" fill="#e9b84c" stroke="#c98e2a" stroke-width=".500"/></svg>
<svg style="left:128px;top:2px" width="16" height="17"><rect x=".700" y="1.700" width="13.600" height="9.600" rx=".800" fill="#c3c7cc" stroke="#a5a9ae" stroke-width=".700"/><rect x="1.500" y="2.500" width="2.200" height="8" fill="#e4e6e9"/><rect x="5.300" y="3.300" width="7.200" height="3" fill="#3f8fdc"/><path d="M5.500 8h7" stroke="#8a8f96" stroke-width="1.100" stroke-dasharray="1 1"/><rect x="6.800" y="11.300" width="1.600" height="1.700" fill="#777"/><ellipse cx="7.500" cy="13.700" rx="6.800" ry=".700" fill="#222"/><circle cx="7.500" cy="13.600" r="1.400" fill="#2fc44a"/></svg>
<svg style="left:153px;top:3px" width="17" height="15"><rect x="3.500" y="1.500" width="5.500" height="12" rx="1" fill="#fff" stroke="#5b86b8" stroke-width=".9"/><rect x="10.500" y="1.500" width="5.500" height="12" rx="1" fill="#fff" stroke="#5b86b8" stroke-width=".9"/><path d="M5 4h2.500M5 6.500h2.500M5 9h2.500M5 11.500h2.500M12 4h2.500M12 6.500h2.500M12 9h2.500M12 11.500h2.500" stroke="#7a8ea8" stroke-width=".9"/><path d="M.500 6.200h3.500V3.800l3.800 3.700-3.800 3.700V8.800H.500z" fill="#22b030" stroke="#167a20" stroke-width=".6"/></svg>
<svg style="left:183px;top:6px" width="12" height="9"><path d="M1 1v7M3.300 1v7" stroke="#2b5c98" stroke-width="1.300"/><path d="M5 .300l5.500 4.200-5.500 4.200z" fill="#2b5c98"/></svg>
</div>
<div class="abs btns" style="left:584px;top:102px;width:78px;height:21px"><i style="left:26px"></i><i style="left:51px"></i>
<div style="left:26px;top:0;width:25px;height:19px;background:#e4e4e4;box-shadow:inset 0 1px 2px rgba(0,0,0,.22)"></div>
<svg style="left:6px;top:2px" width="14" height="16"><rect x="1.500" y="1.500" width="10.500" height="13" rx="1" fill="#fff" stroke="#5a5a5a" stroke-width="1.100"/><path d="M3.500 4.500h1.500M3.500 7h1.500M3.500 9.500h1.500M3.500 12h1.500" stroke="#c44" stroke-width="1.200"/><path d="M6 4.500h4.500M6 7h4.500M6 9.500h4.500M6 12h4.500" stroke="#777" stroke-width="1"/></svg>
<svg style="left:32px;top:2px" width="14" height="16"><rect x="1.500" y="1.500" width="10.500" height="13" rx="1" fill="#fff" stroke="#5a5a5a" stroke-width="1.100"/><path d="M3.500 4h4" stroke="#2a9a6a" stroke-width="1.400"/><path d="M5 5v7M5 7.500h2M5 10h2M5 12.300h2" stroke="#777" stroke-width=".9" fill="none"/><path d="M8 7.500h2.500M8 10h2.500M8 12.300h2.500" stroke="#777" stroke-width="1" stroke-dasharray="1 .700"/></svg>
<svg style="left:55px;top:2px" width="18" height="17"><circle cx="10.500" cy="6.500" r="4.600" fill="#eef0f3" stroke="#a3a8b0" stroke-width="1.500"/><path d="M13.800 10l3 3.500" stroke="#a3a8b0" stroke-width="2.200"/><path d="M1.500 9.500l5 5M6.500 9.500l-5 5" stroke="#c99" stroke-width="1.700"/></svg>
</div>
<div class="abs" style="left:669px;top:102px;width:257px;height:21px;border:1px solid #b9b9b9;border-radius:3px;background:#fff"><i style="left:235px;top:0;width:1px;height:20px;background:#c9c9c9"></i>
<span class="t" style="left:4px;top:3px;color:#b8b8b8;font-size:10.800px">* Начало, / Код, - Штрих код, + Весовой</span>
<svg style="left:242px;top:6px" width="8" height="8"><path d="M1 1l5.500 5.500M6.500 1l-5.500 5.500" stroke="#444" stroke-width="1.100"/></svg></div>
<div class="abs box" style="left:368px;top:127px;width:558px;height:647px">
 <div style="left:0;top:0;width:100%;height:21px;background:#f2f2f2;border-bottom:1px solid #d9d9d9"></div>
 <i style="left:276px;top:0;width:1px;height:20px;background:#d0d0d0"></i>
 <span class="t" style="left:4px;top:3px">Код</span><span class="t" style="left:281px;top:3px">Наименование</span>
 <svg style="left:540px;top:5px" width="7" height="11"><path d="M3.500 0v8.500" stroke="#333" stroke-width="1.300"/><path d="M1 6l2.500 3 2.500-3z" fill="#333" stroke="#333" stroke-width=".6"/></svg>
<div class="row" style="top:21px;border-bottom:1px solid #e6e6e6"><svg style="left:9px;top:6px" width="5" height="7" viewBox="0 0 5 7"><path d="M.5.5l3.500 3-3.500 3z" fill="#444"/></svg><svg style="left:21px;top:3px" width="14" height="12" viewBox="0 0 14 12"><path d="M.5 2.200Q.5 .5 2 .5H5Q6 .5 6.400 1.400L6.900 2.500H12Q13.500 2.500 13.500 4V10Q13.500 11.500 12 11.500H2Q.5 11.500 .5 10Z" fill="url(#fg)" stroke="#dfa534" stroke-width=".900"/><path d="M1 4.300h12" stroke="#e9b949" stroke-width=".700"/></svg><span class="t" style="left:42px;font-size:10.800px">00000044418</span><i style="left:276px;top:0;width:1px;height:19px;background:rgba(0,0,0,.035)"></i><span class="t" style="left:281px;font-size:10.950px">Весовая группа</span></div>
<div class="row g" style="top:40px;border-bottom:1px solid #e6e6e6"><svg style="left:9px;top:6px" width="5" height="7" viewBox="0 0 5 7"><path d="M.5.5l3.500 3-3.500 3z" fill="#444"/></svg><svg style="left:21px;top:3px" width="14" height="12" viewBox="0 0 14 12"><path d="M.5 2.200Q.5 .5 2 .5H5Q6 .5 6.400 1.400L6.900 2.500H12Q13.500 2.500 13.500 4V10Q13.500 11.500 12 11.500H2Q.5 11.500 .5 10Z" fill="url(#fg)" stroke="#dfa534" stroke-width=".900"/><path d="M1 4.300h12" stroke="#e9b949" stroke-width=".700"/></svg><span class="t" style="left:42px;font-size:10.800px">00000120602</span><i style="left:276px;top:0;width:1px;height:19px;background:rgba(0,0,0,.035)"></i><span class="t" style="left:281px;font-size:10.950px">Готовая продукция</span></div>
<div class="row" style="top:59px;border-bottom:1px solid #e6e6e6"><svg style="left:9px;top:6px" width="5" height="7" viewBox="0 0 5 7"><path d="M.5.5l3.500 3-3.500 3z" fill="#444"/></svg><svg style="left:21px;top:3px" width="14" height="12" viewBox="0 0 14 12"><path d="M.5 2.200Q.5 .5 2 .5H5Q6 .5 6.400 1.400L6.900 2.500H12Q13.500 2.500 13.500 4V10Q13.500 11.500 12 11.500H2Q.5 11.500 .5 10Z" fill="url(#fg)" stroke="#dfa534" stroke-width=".900"/><path d="M1 4.300h12" stroke="#e9b949" stroke-width=".700"/></svg><span class="t" style="left:42px;font-size:10.800px">00000069934</span><i style="left:276px;top:0;width:1px;height:19px;background:rgba(0,0,0,.035)"></i><span class="t" style="left:281px;font-size:10.950px">Кулинария Дана</span></div>
<div class="row g" style="top:78px;border-bottom:1px solid #e6e6e6;background:#fdf0c4"><svg style="left:9px;top:6px" width="5" height="7" viewBox="0 0 5 7"><path d="M.5.5l3.500 3-3.500 3z" fill="#444"/></svg><svg style="left:21px;top:3px" width="14" height="12" viewBox="0 0 14 12"><path d="M.5 2.200Q.5 .5 2 .5H5Q6 .5 6.400 1.400L6.900 2.500H12Q13.500 2.500 13.500 4V10Q13.500 11.500 12 11.500H2Q.5 11.500 .5 10Z" fill="url(#fg)" stroke="#dfa534" stroke-width=".900"/><path d="M1 4.300h12" stroke="#e9b949" stroke-width=".700"/></svg><span class="t" style="left:42px;font-size:10.800px">00000121029</span><i style="left:276px;top:0;width:1px;height:19px;background:rgba(0,0,0,.035)"></i><span class="t" style="left:281px;font-size:10.950px">Магазин</span></div>
<div class="row" style="top:97px;border-bottom:1px solid #e6e6e6"><svg style="left:9px;top:6px" width="5" height="7" viewBox="0 0 5 7"><path d="M.5.5l3.500 3-3.500 3z" fill="#444"/></svg><svg style="left:21px;top:3px" width="14" height="12" viewBox="0 0 14 12"><path d="M.5 2.200Q.5 .5 2 .5H5Q6 .5 6.400 1.400L6.900 2.500H12Q13.500 2.500 13.500 4V10Q13.500 11.500 12 11.500H2Q.5 11.500 .5 10Z" fill="url(#fg)" stroke="#dfa534" stroke-width=".900"/><path d="M1 4.300h12" stroke="#e9b949" stroke-width=".700"/></svg><span class="t" style="left:42px;font-size:10.800px">00000120600</span><i style="left:276px;top:0;width:1px;height:19px;background:rgba(0,0,0,.035)"></i><span class="t" style="left:281px;font-size:10.950px">Товары</span></div>
<div class="row g" style="top:116px;border-bottom:1px solid #e6e6e6"><svg style="left:9px;top:6px" width="5" height="7" viewBox="0 0 5 7"><path d="M.5.5l3.500 3-3.500 3z" fill="#444"/></svg><svg style="left:21px;top:3px" width="14" height="12" viewBox="0 0 14 12"><path d="M.5 2.200Q.5 .5 2 .5H5Q6 .5 6.400 1.400L6.900 2.500H12Q13.500 2.500 13.500 4V10Q13.500 11.500 12 11.500H2Q.5 11.500 .5 10Z" fill="url(#fg)" stroke="#dfa534" stroke-width=".900"/><path d="M1 4.300h12" stroke="#e9b949" stroke-width=".700"/></svg><span class="t" style="left:42px;font-size:10.800px">00000120603</span><i style="left:276px;top:0;width:1px;height:19px;background:rgba(0,0,0,.035)"></i><span class="t" style="left:281px;font-size:10.950px">Услуги</span></div>
<div class="row" style="top:135px;border-bottom:1px solid #e6e6e6"><svg style="left:23px;top:6px" width="11" height="5" viewBox="0 0 11 5"><rect x=".5" y=".5" width="10" height="3.500" rx="1" fill="#7fa6cf" stroke="#4f7fb2" stroke-width=".8"/></svg><span class="t" style="left:42px;font-size:10.800px">00100011041</span><i style="left:276px;top:0;width:1px;height:19px;background:rgba(0,0,0,.035)"></i><span class="t" style="left:281px;font-size:10.950px">Гастроемкость GN 1/1*40 - 4,5 л</span></div>
<div class="row g" style="top:154px;border-bottom:1px solid #e6e6e6"><svg style="left:23px;top:6px" width="11" height="5" viewBox="0 0 11 5"><rect x=".5" y=".5" width="10" height="3.500" rx="1" fill="#7fa6cf" stroke="#4f7fb2" stroke-width=".8"/></svg><span class="t" style="left:42px;font-size:10.800px">00100006923</span><i style="left:276px;top:0;width:1px;height:19px;background:rgba(0,0,0,.035)"></i><span class="t" style="left:281px;font-size:10.950px">Крупа гречневая</span></div>
<div class="row" style="top:173px;border-bottom:1px solid #e6e6e6"><svg style="left:23px;top:6px" width="11" height="5" viewBox="0 0 11 5"><rect x=".5" y=".5" width="10" height="3.500" rx="1" fill="#7fa6cf" stroke="#4f7fb2" stroke-width=".8"/></svg><span class="t" style="left:42px;font-size:10.800px">00100010411</span><i style="left:276px;top:0;width:1px;height:19px;background:rgba(0,0,0,.035)"></i><span class="t" style="left:281px;font-size:10.950px">Крупа рис (рис шлифованный)</span></div>
<div class="row g" style="top:192px;border-bottom:1px solid #e6e6e6"><svg style="left:23px;top:6px" width="11" height="5" viewBox="0 0 11 5"><rect x=".5" y=".5" width="10" height="3.500" rx="1" fill="#7fa6cf" stroke="#4f7fb2" stroke-width=".8"/></svg><span class="t" style="left:42px;font-size:10.800px">00100012703</span><i style="left:276px;top:0;width:1px;height:19px;background:rgba(0,0,0,.035)"></i><span class="t" style="left:281px;font-size:10.950px">ПЕШ НАТУРАЛЬНЫЙ КУБЛЕЙ, БЛАНШИРОВАНН</span></div>
<div class="row" style="top:211px;border-bottom:1px solid #e6e6e6"><svg style="left:23px;top:6px" width="11" height="5" viewBox="0 0 11 5"><rect x=".5" y=".5" width="10" height="3.500" rx="1" fill="#7fa6cf" stroke="#4f7fb2" stroke-width=".8"/></svg><span class="t" style="left:42px;font-size:10.800px">00100006671</span><i style="left:276px;top:0;width:1px;height:19px;background:rgba(0,0,0,.035)"></i><span class="t" style="left:281px;font-size:10.950px">Макароны "Рожки"</span></div>
<div class="row g" style="top:230px;border-bottom:1px solid #e6e6e6"><svg style="left:23px;top:6px" width="11" height="5" viewBox="0 0 11 5"><rect x=".5" y=".5" width="10" height="3.500" rx="1" fill="#7fa6cf" stroke="#4f7fb2" stroke-width=".8"/></svg><span class="t" style="left:42px;font-size:10.800px">00100013071</span><i style="left:276px;top:0;width:1px;height:19px;background:rgba(0,0,0,.035)"></i><span class="t" style="left:281px;font-size:10.950px">НАБОР "КРОТ" АКТИВНЫЙ 1Л + "BLITZ" АНТИЖИ…</span></div>
<div class="row" style="top:249px;border-bottom:1px solid #e6e6e6"><svg style="left:23px;top:6px" width="11" height="5" viewBox="0 0 11 5"><rect x=".5" y=".5" width="10" height="3.500" rx="1" fill="#7fa6cf" stroke="#4f7fb2" stroke-width=".8"/></svg><span class="t" style="left:42px;font-size:10.800px">00100007002</span><i style="left:276px;top:0;width:1px;height:19px;background:rgba(0,0,0,.035)"></i><span class="t" style="left:281px;font-size:10.950px">Подарочный сертификат номиналом 3000тг</span></div>
<div class="row g" style="top:268px;border-bottom:1px solid #e6e6e6"><svg style="left:23px;top:6px" width="11" height="5" viewBox="0 0 11 5"><rect x=".5" y=".5" width="10" height="3.500" rx="1" fill="#7fa6cf" stroke="#4f7fb2" stroke-width=".8"/></svg><span class="t" style="left:42px;font-size:10.800px">00100011040</span><i style="left:276px;top:0;width:1px;height:19px;background:rgba(0,0,0,.035)"></i><span class="t" style="left:281px;font-size:10.950px">Поднос 22х32х4 №2 MEZE нерж.ст.</span></div>
<div class="row" style="top:287px;border-bottom:1px solid #e6e6e6"><svg style="left:23px;top:6px" width="11" height="5" viewBox="0 0 11 5"><rect x=".5" y=".5" width="10" height="3.500" rx="1" fill="#7fa6cf" stroke="#4f7fb2" stroke-width=".8"/></svg><span class="t" style="left:42px;font-size:10.800px">00100011039</span><i style="left:276px;top:0;width:1px;height:19px;background:rgba(0,0,0,.035)"></i><span class="t" style="left:281px;font-size:10.950px">Поднос 25х38х4 №3 MEZE нерж.ст.</span></div>
<div class="row g" style="top:306px;border-bottom:1px solid #e6e6e6"><svg style="left:23px;top:6px" width="11" height="5" viewBox="0 0 11 5"><rect x=".5" y=".5" width="10" height="3.500" rx="1" fill="#7fa6cf" stroke="#4f7fb2" stroke-width=".8"/></svg><span class="t" style="left:42px;font-size:10.800px">00100006922</span><i style="left:276px;top:0;width:1px;height:19px;background:rgba(0,0,0,.035)"></i><span class="t" style="left:281px;font-size:10.950px">Подсолнечное масло Олейна, 1л</span></div>
<div class="row" style="top:325px;border-bottom:1px solid #e6e6e6"><svg style="left:23px;top:6px" width="11" height="5" viewBox="0 0 11 5"><rect x=".5" y=".5" width="10" height="3.500" rx="1" fill="#7fa6cf" stroke="#4f7fb2" stroke-width=".8"/></svg><span class="t" style="left:42px;font-size:10.800px">00100006921</span><i style="left:276px;top:0;width:1px;height:19px;background:rgba(0,0,0,.035)"></i><span class="t" style="left:281px;font-size:10.950px">Подсолнечное масло раф.дезд."Шедевер", 1л</span></div>
<div class="row g" style="top:344px;border-bottom:1px solid #e6e6e6"><svg style="left:23px;top:6px" width="11" height="5" viewBox="0 0 11 5"><rect x=".5" y=".5" width="10" height="3.500" rx="1" fill="#7fa6cf" stroke="#4f7fb2" stroke-width=".8"/></svg><span class="t" style="left:42px;font-size:10.800px">00100010856</span><i style="left:276px;top:0;width:1px;height:19px;background:rgba(0,0,0,.035)"></i><span class="t" style="left:281px;font-size:10.950px">Разовые дезинсекционные работы против моли Ав…</span></div>
<div class="row" style="top:363px;border-bottom:1px solid #e6e6e6"><svg style="left:23px;top:6px" width="11" height="5" viewBox="0 0 11 5"><rect x=".5" y=".5" width="10" height="3.500" rx="1" fill="#7fa6cf" stroke="#4f7fb2" stroke-width=".8"/></svg><span class="t" style="left:42px;font-size:10.800px">00100006672</span><i style="left:276px;top:0;width:1px;height:19px;background:rgba(0,0,0,.035)"></i><span class="t" style="left:281px;font-size:10.950px">Рис шлифованный в 25 кг мешках</span></div>
<div class="row g" style="top:382px;border-bottom:1px solid #e6e6e6"><svg style="left:23px;top:6px" width="11" height="5" viewBox="0 0 11 5"><rect x=".5" y=".5" width="10" height="3.500" rx="1" fill="#7fa6cf" stroke="#4f7fb2" stroke-width=".8"/></svg><span class="t" style="left:42px;font-size:10.800px">00100014610</span><i style="left:276px;top:0;width:1px;height:19px;background:rgba(0,0,0,.035)"></i><span class="t" style="left:281px;font-size:10.950px">Строительные материалы</span></div>
<div class="row" style="top:401px;border-bottom:1px solid #e6e6e6"><svg style="left:23px;top:6px" width="11" height="5" viewBox="0 0 11 5"><rect x=".5" y=".5" width="10" height="3.500" rx="1" fill="#7fa6cf" stroke="#4f7fb2" stroke-width=".8"/></svg><span class="t" style="left:42px;font-size:10.800px">00000123800</span><i style="left:276px;top:0;width:1px;height:19px;background:rgba(0,0,0,.035)"></i><span class="t" style="left:281px;font-size:10.950px">УУУ</span></div>
<div class="row g" style="top:420px;border-bottom:1px solid #e6e6e6"><svg style="left:23px;top:6px" width="11" height="5" viewBox="0 0 11 5"><rect x=".5" y=".5" width="10" height="3.500" rx="1" fill="#7fa6cf" stroke="#4f7fb2" stroke-width=".8"/></svg><span class="t" style="left:42px;font-size:10.800px">00100011042</span><i style="left:276px;top:0;width:1px;height:19px;background:rgba(0,0,0,.035)"></i><span class="t" style="left:281px;font-size:10.950px">Щипцы для сервиса 25 см с белой ручкой</span></div>

</div>
<div class="abs" style="left:829px;top:773px;width:97px;height:22px;border:1px solid #b0b0b0;background:#fff"><svg style="left:0;top:0" width="96" height="20"><path d="M7.0 7.500h9" stroke="#b8b8b8" stroke-width="1.300"/><path d="M6.5 13.500l5-5 5 5z" fill="#b8b8b8"/></svg><i style="left:23px;top:0;width:1px;height:20px;background:#bdbdbd"></i><svg style="left:0;top:0" width="96" height="20"><path d="M30.5 13l5-5 5 5z" fill="#b8b8b8"/></svg><i style="left:47px;top:0;width:1px;height:20px;background:#bdbdbd"></i><svg style="left:0;top:0" width="96" height="20"><path d="M54.5 8l5 5 5-5z" fill="#b8b8b8"/></svg><i style="left:71px;top:0;width:1px;height:20px;background:#bdbdbd"></i><svg style="left:0;top:0" width="96" height="20"><path d="M79.0 13.500h9" stroke="#b8b8b8" stroke-width="1.300"/><path d="M78.5 7.500l5 5 5-5z" fill="#b8b8b8"/></svg></div>
<div class="abs vd" style="left:929px;top:100px;height:697px"></div>
<!-- right -->
<div class="abs" style="left:934px;top:102px;width:110px;height:693px;border:1px solid #c4c4c4;border-radius:5px 0 0 0;background:#fff"></div>
<svg style="left:941px;top:106px" width="16" height="16" viewBox="0 0 16 16"><rect x="1.500" y="1.500" width="12" height="13.500" fill="#fdfdfd" stroke="#7f9fc0"/><path d="M3.500 4.500h8M3.500 6.500h8M3.500 8.500h8M3.500 10.500h8M3.500 12.500h8" stroke="#c3cfdc" stroke-width=".900"/></svg>
<div class="abs t" style="left:963px;top:107px;font-size:11.350px;color:#222">Документы</div>
<div class="abs btns" style="left:943px;top:133px;width:52px;height:21px"><i style="left:25px"></i>
<svg style="left:0;top:0" width="24" height="19"><path d="M5.800 3.300h7.500l3.500 3.500v9.700H5.800z" fill="#cdd0d5" stroke="#b5bac1" stroke-width=".800"/><path d="M13.300 3.300v3.500h3.500" fill="#e4e6ea" stroke="#b5bac1" stroke-width=".600"/><circle cx="8.500" cy="13.300" r="4.400" fill="#bfa2a2"/><path d="M6.400 11.200l4.200 4.200M10.600 11.200l-4.200 4.200" stroke="#dccaca" stroke-width="1.100"/></svg>
<svg style="left:31px;top:4px" width="13" height="13"><path d="M1.500 1.500l10 10M11.500 1.500l-10 10" stroke="#b09a98" stroke-width="1.700"/></svg></div>
<div class="abs btns" style="left:1009px;top:133px;width:40px;height:21px">
<svg style="left:3px;top:1px" width="16" height="16"><path d="M5 1v8M1 5h8" stroke="#18a818" stroke-width="2.500"/><path d="M2 9.500h4v3h-4zM7 9.500h4v3H7zM12 9.500h4v3h-4z" fill="#fff" stroke="#7a8a9a" stroke-width=".9"/></svg></div>
<div class="abs box" style="left:943px;top:158px;width:100px;height:631px">
 <div style="left:0;top:0;width:100%;height:20px;background:#f2f2f2;border-bottom:1px solid #d9d9d9"></div>
 <i style="left:51px;top:0;width:1px;height:20px;background:#d0d0d0"></i>
 <span class="t" style="left:4px;top:3px;font-size:10.900px">ШК</span><span class="t" style="left:56px;top:3px;font-size:10.900px">ТМЦ</span>
</div>
<!-- annotations -->
<svg style="left:0;top:0;z-index:5" width="1027" height="823">
<path d="M18.700 26.800Q120 27.300 224.300 29.100" fill="none" stroke="#d8141c" stroke-width="3.300"/>
<rect x="630.200" y="146" width="180.600" height="19.700" fill="none" stroke="#d8141c" stroke-width="3"/>
<path d="M478 236.500L631 217" stroke="#d8141c" stroke-width="2.600" stroke-linecap="round"/>
<path d="M644 216L626.200 211l5 6-3.700 5z" fill="#d8141c"/>
</svg>
<div class="abs ov" style="left:420px;top:277px;width:517px;height:58px;z-index:6;font-size:13.400px;line-height:20px;letter-spacing:-.05px;padding:9px 0 0 7.500px">на <b class="w">ТСД</b> попадает товар из группы <b>МАГАЗИН</b><br><b>П</b>оэтому нет товыров из других групп, не внутри этого каталога</div>
<div class="abs ov" style="left:416px;top:377px;width:597px;height:58px;z-index:6;font-size:13.400px;line-height:20px;letter-spacing:-.085px;padding:9.300px 0 0 7px"><b>П</b>еремесите все товары магазина в группу <b>МАГАЗИН</b> и сделайте выгрузку<br>на <b class="w">ТСД</b></div>

<div id="bot" class="abs"><i style="left:109px"></i><i style="left:369px"></i><i style="left:622px"></i><i style="left:880px"></i><i style="left:964px"></i><b style="left:881px;top:0;width:83px;height:9px;background:#fff"></b></div>
</body></html>
